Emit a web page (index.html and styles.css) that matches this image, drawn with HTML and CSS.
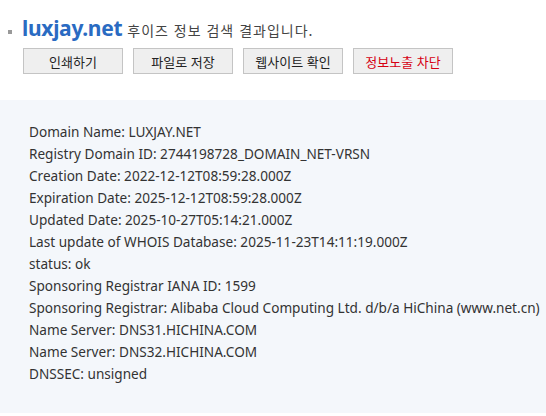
FILE: index.html
```html
<!DOCTYPE html>
<html lang="ko">
<head>
<meta charset="utf-8">
<link rel="stylesheet" href="styles.css">
</head>
<body>
<div class="head">
  <h1 class="title"><span class="bullet"></span><span class="domain">luxjay.net</span><span class="sub">후이즈 정보 검색 결과입니다.</span></h1>
  <div class="buttons">
    <button class="btn">인쇄하기</button>
    <button class="btn">파일로 저장</button>
    <button class="btn">웹사이트 확인</button>
    <button class="btn btn-red">정보노출 차단</button>
  </div>
</div>
<div class="panel">
  <div class="line">Domain Name: LUXJAY.NET</div>
  <div class="line">Registry Domain ID: 2744198728_DOMAIN_NET-VRSN</div>
  <div class="line">Creation Date: 2022-12-12T08:59:28.000Z</div>
  <div class="line">Expiration Date: 2025-12-12T08:59:28.000Z</div>
  <div class="line">Updated Date: 2025-10-27T05:14:21.000Z</div>
  <div class="line">Last update of WHOIS Database: 2025-11-23T14:11:19.000Z</div>
  <div class="line">status: ok</div>
  <div class="line">Sponsoring Registrar IANA ID: 1599</div>
  <div class="line">Sponsoring Registrar: Alibaba Cloud Computing Ltd. d/b/a HiChina (www.net.cn)</div>
  <div class="line">Name Server: DNS31.HICHINA.COM</div>
  <div class="line">Name Server: DNS32.HICHINA.COM</div>
  <div class="line">DNSSEC: unsigned</div>
</div>
</body>
</html>
```
FILE: styles.css
```css
html, body {
  margin: 0;
  padding: 0;
  background: #ffffff;
}
body {
  font-family: "Noto Sans CJK KR", "Noto Sans", sans-serif;
  color: #333333;
  width: 546px;
  height: 416px;
  overflow: hidden;
}
.head {
  padding: 14px 0 0 8px;
  height: 86px;
  box-sizing: border-box;
}
.title {
  margin: 0;
  display: flex;
  align-items: baseline;
  font-weight: normal;
  height: 30px;
}
.bullet {
  width: 4px;
  height: 4px;
  background: #999999;
  margin-right: 10px;
  align-self: center;
  position: relative;
  top: 3px;
}
.domain {
  font-family: "Noto Sans", sans-serif;
  font-size: 21px;
  font-weight: bold;
  color: #2a6bc2;
  letter-spacing: -0.3px;
  margin-right: 5px;
}
.sub {
  font-size: 14px;
  letter-spacing: 1px;
  color: #444444;
}
.buttons {
  display: flex;
  gap: 10px;
  margin: 4px 0 0 15px;
}
.btn {
  width: 100px;
  height: 26px;
  padding: 0;
  border: 1px solid #c4c4c4;
  background: #efefef;
  font-family: "Noto Sans CJK KR", sans-serif;
  font-size: 13px;
  color: #222222;
  border-radius: 0;
}
.btn-red {
  color: #d60012;
}
.panel {
  background: #f4f7fb;
  margin-top: 14px;
  padding: 21px 0 0 29px;
  height: 313px;
  box-sizing: border-box;
  font-family: "Noto Sans", "Noto Sans CJK KR", sans-serif;
  font-size: 13.6px;
  color: #333333;
}
.line {
  line-height: 22px;
  height: 22px;
  white-space: nowrap;
}
```
